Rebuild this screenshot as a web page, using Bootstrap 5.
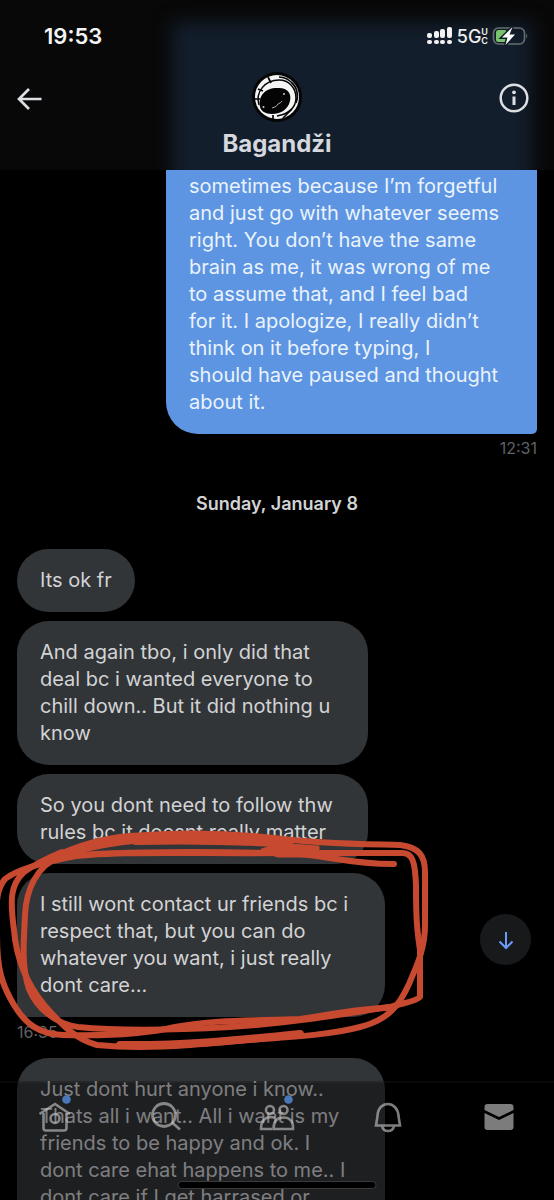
<!DOCTYPE html>
<html lang="en" data-bs-theme="dark">
<head>
<meta charset="utf-8">
<meta name="viewport" content="width=device-width, initial-scale=1">
<title>Bagandži</title>
<link href="https://cdn.jsdelivr.net/npm/bootstrap@5.3.0/dist/css/bootstrap.min.css" rel="stylesheet">
<style>
  body { background: #000; font-family: Inter, "Liberation Sans", sans-serif; font-size: 20px; line-height: 27px; color: #d2d3d5; }
  .chat-app { height: 100vh; }
  .chat-header { height: 170px; background: #080808; }
  .header-glow { top: 22px; bottom: -24px; left: 172px; right: 22px; background: #131e2c; filter: blur(9px); }
  .status-row { height: 72px; padding: 0 26px 0 44px; }
  .clock { font-size: 22px; font-weight: 600; color: #f4f4f4; }
  .network { font-size: 18px; font-weight: 500; color: #eee; }
  .network-sub { font-size: 9px; line-height: 9px; font-weight: 600; color: #eee; }
  .title-row { padding: 0 17px; }
  .icon-btn { width: 48px; height: 52px; padding: 0; border: 0; background: none; color: #dcdfe3; }
  .icon-info { padding-right: 8px; }
  .chat-name { font-size: 24px; line-height: 30px; font-weight: 700; color: #d5d8de; margin-top: 5px; }
  .thread { padding: 0 17px; gap: 9px; }
  .bubble { padding: 18px 23px; border-radius: 32px; background: #323538; max-width: 100%; }
  .bubble-md { width: 351px; }
  .bubble-lg { width: 368px; }
  .bubble-out { width: 371px; padding-top: 3px; border-radius: 0 0 5px 32px; background: #5d95e2; color: #eaf3fc; }
  .bubble-tail { border-bottom-left-radius: 5px; }
  .stamp { font-size: 16px; line-height: 20px; color: #606165; }
  .stamp-in { margin: -4px 0 7px; }
  .stamp-out { margin-top: -5px; }
  .day { font-size: 18px; line-height: 24px; font-weight: 600; color: #d2d3d5; margin: 25px 0 24px; }
  .scribble { left: -17px; top: -47px; pointer-events: none; z-index: 1; }
  .jump { right: 23px; bottom: 235px; width: 51px; height: 51px; padding: 0; border: 0; background: #17191b; color: #6b9bf5; }
  .tabs-bar { height: 119px; background: rgba(0, 0, 0, .4); border-top: 2px solid rgba(255, 255, 255, .04); padding-top: 17px; }
  .tabs-bar a { color: rgba(200, 200, 200, .62); height: 32px; }
  .tabs-bar svg { overflow: visible; }
  .home-bar { bottom: 11px; width: 199px; height: 8px; background: #000; border: 1px solid #3a3b3d; }
</style>
</head>
<body>
<div class="chat-app d-flex flex-column position-relative overflow-hidden">
  <header class="chat-header position-relative overflow-hidden flex-shrink-0">
    <div class="header-glow position-absolute"></div>
    <div class="position-relative">
      <div class="status-row d-flex align-items-center justify-content-between">
        <span class="clock">19:53</span>
        <div class="d-flex align-items-center">
          <svg width="26" height="18" viewBox="0 0 26 18" fill="#f2f2f2" aria-label="Signal">
            <rect x="0" y="6" width="5" height="5" rx="2"/><rect x="7" y="4" width="5" height="7" rx="2"/><rect x="13" y="2" width="5" height="9" rx="2"/><rect x="20" y="0" width="5" height="11" rx="2"/>
            <rect x="0" y="13" width="5" height="4" rx="2"/><rect x="7" y="13" width="5" height="4" rx="2"/><rect x="13" y="13" width="5" height="4" rx="2"/><rect x="20" y="13" width="5" height="4" rx="2"/>
          </svg>
          <span class="network ms-1">5G</span>
          <span class="network-sub d-flex flex-column"><span>U</span><span>C</span></span>
          <svg class="ms-1" width="36" height="20" viewBox="0 0 36 20" aria-label="Battery charging">
            <rect x="1.5" y="2" width="31" height="16" rx="5" fill="none" stroke="#66706f" stroke-width="1.6"/>
            <path d="M34.3 7.5q2 2.5 0 5z" fill="#66706f"/>
            <rect x="4" y="4" width="11" height="12" rx="2.5" fill="#78c46c"/>
            <path d="M20.500 1L10 11.500h5.500L13.500 19L23 8.500h-5.500z" fill="#fff" stroke="#131e2c" stroke-width="3" paint-order="stroke"/>
          </svg>
        </div>
      </div>
      <div class="title-row d-flex justify-content-between align-items-start">
        <button class="icon-btn text-start" type="button" aria-label="Back">
          <svg width="26" height="24" viewBox="0 0 26 24" fill="none" stroke="currentColor" stroke-width="2.7"><path d="M24.500 12H2M12 2L2 12l10 10"/></svg>
        </button>
        <div class="text-center">
          <svg class="d-block mx-auto" width="52" height="52" viewBox="0 0 52 52" aria-label="Avatar">
            <circle cx="26" cy="25" r="25" fill="#050505"/>
            <circle cx="26" cy="25" r="22" fill="#f5f5f5"/>
            <g fill="none" stroke="#060606">
              <path d="M8 33C4 20 14 8 28 8c10 0 17 8 17 18 0 9-7 16-19 18" stroke-width="1.500"/>
              <path d="M7 17l5 2M17 5l3 6M4 27h5M40 10c6 5 8 13 5 21M28 5q8 0 14 7M22 43v4M32 46l9-9" stroke-width="1.700"/>
            </g>
            <path d="M9 35C7 24 14 16 26 16c10-1 15 5 13 13-2 9-10 13-18 13-7 0-11-3-12-7z" fill="#040404"/>
            <path d="M21 36q5-1 6-4 3-1 4-3" fill="none" stroke="#aaa"/>
            <circle cx="33" cy="22" r="1" fill="#ccc"/><circle cx="12.500" cy="35" r="1" fill="#ccc"/>
          </svg>
          <h1 class="chat-name mb-0">Bagandži</h1>
        </div>
        <button class="icon-btn icon-info text-end" type="button" aria-label="Conversation info">
          <svg width="30" height="30" viewBox="0 0 30 30" fill="none" stroke="currentColor" stroke-width="2.500"><circle cx="15" cy="15" r="13.300"/><path d="M15 13.500V22" stroke-width="3"/><circle cx="15" cy="9.300" r="1.900" fill="currentColor" stroke="none"/></svg>
        </button>
      </div>
    </div>
  </header>

  <main class="thread d-flex flex-column align-items-start">
    <div class="bubble bubble-out align-self-end">sometimes because I’m forgetful<br>and just go with whatever seems<br>right. You don’t have the same<br>brain as me, it was wrong of me<br>to assume that, and I feel bad<br>for it. I apologize, I really didn’t<br>think on it before typing, I<br>should have paused and thought<br>about it.</div>
    <time class="stamp stamp-out align-self-end">12:31</time>
    <h2 class="day align-self-center">Sunday, January 8</h2>
    <div class="bubble">Its ok fr</div>
    <div class="bubble bubble-md">And again tbo, i only did that<br>deal bc i wanted everyone to<br>chill down.. But it did nothing u<br>know</div>
    <div class="bubble bubble-md">So you dont need to follow thw<br>rules bc it doesnt really matter</div>
    <div class="position-relative">
      <div class="bubble bubble-lg bubble-tail">I still wont contact ur friends bc i<br>respect that, but you can do<br>whatever you want, i just really<br>dont care...</div>
      <svg class="scribble position-absolute" width="440" height="230" viewBox="0 826 440 230" fill="none" stroke="#c74a30" stroke-width="6" stroke-linecap="round" stroke-linejoin="round" aria-hidden="true">
        <path d="M394 864C350 864 334 857 300 854C220 851 100 851 60 857C37 865 26 890 25 915C24 940 21 965 29 989C37 1008 55 1024 78 1027C120 1031 175 1030 230 1027C290 1023 340 1015 388 1007"/>
        <path d="M52 858C80 844 105 838 130 836C180 832 230 833 274 838C320 844 360 844 400 845C418 847 425 855 425 872V925C425 950 416 967 409 984C399 1006 388 1020 360 1027C330 1035 290 1037 250 1040C200 1044 150 1050 97 1045C75 1039 62 1025 45 1006C25 982 16 955 14 930C10 900 10 885 24 872C38 862 50 857 62 852"/>
        <path d="M78 855C50 862 20 867 5 879C-6 892-3 910-3 935C-3 970 2 985 14 1005C26 1025 40 1034 63 1035C100 1036 145 1034 175 1027C215 1019 260 1021 300 1019C330 1015 360 1008 386 1008"/>
        <path d="M62 858C110 850 200 854 274 853H402C412 853 415 860 416 885C416 920 417 930 420 950V997C416 1002 400 1003 388 1008"/>
        <path d="M60 855C90 846 120 841 150 839C190 837 240 838 290 844" stroke-width="7"/>
        <path d="M150 838C190 835 240 836 285 843" stroke-width="10"/>
        <path d="M135 843C180 842 240 842 310 847" stroke-width="4"/>
        <path d="M278 845L318 847V856H278L262 850z" fill="#c74a30" stroke-width="3"/>
        <path d="M120 1045C180 1046 240 1040 300 1034" stroke-width="8"/>
      </svg>
    </div>
    <time class="stamp stamp-in">16:35</time>
    <div class="bubble bubble-lg">Just dont hurt anyone i know..<br>Thats all i want.. All i want is my<br>friends to be happy and ok. I<br>dont care ehat happens to me.. I<br>dont care if I get harrased or</div>
  </main>

  <button class="jump btn rounded-circle position-absolute" type="button" aria-label="Jump to latest message">
    <svg width="16" height="18" viewBox="0 0 16 18" fill="none" stroke="currentColor" stroke-width="2"><path d="M8 0v16M1.500 9.500L8 16l6.500-6.500"/></svg>
  </button>

  <nav class="tabs-bar position-absolute bottom-0 start-0 end-0 d-flex align-items-start" aria-label="Main">
    <a class="flex-fill text-center" href="#home" aria-label="Home">
      <svg class="d-block mx-auto" width="36" height="36" viewBox="0 0 36 36" fill="none" stroke="currentColor" stroke-width="2.600"><path d="M2.500 14L18 4l15 10M6.500 13v15q0 2.500 2.500 2.500h18q2.500 0 2.500-2.500V13"/><circle cx="18" cy="18.500" r="4.500"/><circle cx="29.500" cy="-.5" r="4.300" fill="#4a77b8" stroke="none"/></svg>
    </a>
    <a class="flex-fill text-center" href="#search" aria-label="Search">
      <svg class="d-block mx-auto" width="36" height="36" viewBox="0 0 36 36" fill="none" stroke="currentColor" stroke-width="2.800"><circle cx="16" cy="15" r="11.500"/><path d="M24 22.500l8 7"/></svg>
    </a>
    <a class="flex-fill text-center" href="#communities" aria-label="Communities">
      <svg class="d-block mx-auto" width="36" height="36" viewBox="0 0 36 36" fill="none" stroke="currentColor" stroke-width="2.600"><circle cx="11" cy="10" r="4"/><circle cx="24.500" cy="10" r="4"/><path d="M16 18q-2-1-5-1-9 1-9 12h11M14.500 29q0-11.500 10-11.500T34 29z"/><circle cx="29.500" cy="-.5" r="4.300" fill="#4a77b8" stroke="none"/></svg>
    </a>
    <a class="flex-fill text-center" href="#notifications" aria-label="Notifications">
      <svg class="d-block mx-auto" width="36" height="36" viewBox="0 0 36 36" fill="none" stroke="currentColor" stroke-width="2.600"><path d="M7.500 16C8 0 27.500 0 28.500 16l1.500 9.500H6zM12 26q1 5 6 5t6-5"/></svg>
    </a>
    <a class="flex-fill text-center" href="#messages" aria-label="Messages">
      <svg class="d-block mx-auto" width="36" height="36" viewBox="0 0 36 36" fill="currentColor"><path d="M3.500 10V7q0-3 3-3h23q3 0 3 3v3L18 17zM3.500 13L18 20l14.500-7v14q0 3-3 3h-23q-3 0-3-3z"/></svg>
    </a>
  </nav>
  <div class="home-bar rounded-pill position-absolute start-50 translate-middle-x"></div>
</div>
<script src="https://cdn.jsdelivr.net/npm/bootstrap@5.3.0/dist/js/bootstrap.bundle.min.js"></script>
</body>
</html>
